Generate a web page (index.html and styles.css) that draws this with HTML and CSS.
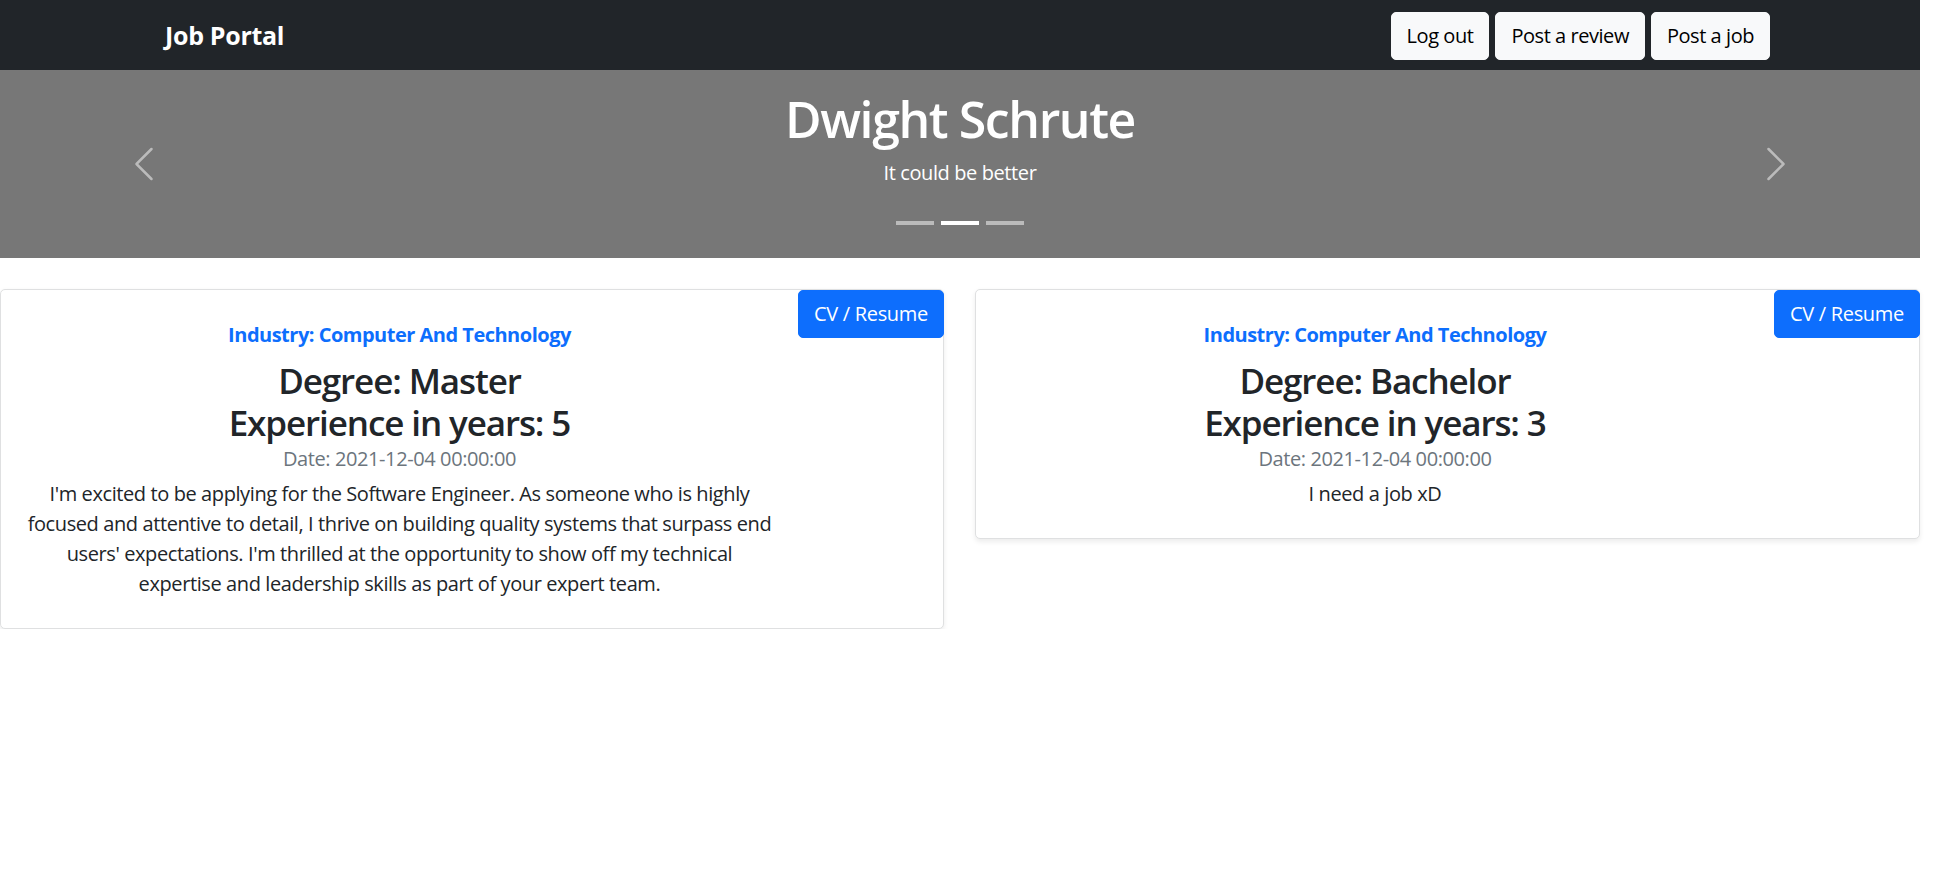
FILE: index.html
```html
<!DOCTYPE html>
<html lang="en">
<head>
<meta charset="utf-8">
<title>Job Portal</title>
<link rel="stylesheet" href="styles.css">
</head>
<body>
<div class="page">
  <nav class="navbar">
    <a class="brand" href="#">Job Portal</a>
    <div class="nav-actions">
      <button class="btn btn-light">Log out</button>
      <button class="btn btn-light">Post a review</button>
      <button class="btn btn-light">Post a job</button>
    </div>
  </nav>

  <div class="carousel">
    <button class="control" aria-label="Previous">
      <svg class="control-icon" viewBox="0 0 16 16"><path d="M11.354 1.646a.5.5 0 0 1 0 .708L5.707 8l5.647 5.646a.5.5 0 0 1-.708.708l-6-6a.5.5 0 0 1 0-.708l6-6a.5.5 0 0 1 .708 0z"/></svg>
    </button>
    <div class="carousel-center">
      <div class="caption">
        <h1 class="caption-title">Dwight Schrute</h1>
        <p class="caption-text">It could be better</p>
      </div>
      <div class="indicators">
        <span class="indicator"></span>
        <span class="indicator active"></span>
        <span class="indicator"></span>
      </div>
    </div>
    <button class="control" aria-label="Next">
      <svg class="control-icon" viewBox="0 0 16 16"><path d="M4.646 1.646a.5.5 0 0 1 .708 0l6 6a.5.5 0 0 1 0 .708l-6 6a.5.5 0 0 1-.708-.708L10.293 8 4.646 2.354a.5.5 0 0 1 0-.708z"/></svg>
    </button>
  </div>

  <div class="cards">
    <div class="card">
      <div class="card-body">
        <div class="industry">Industry: Computer And Technology</div>
        <h3 class="degree">Degree: Master<br>Experience in years: 5</h3>
        <div class="date">Date: 2021-12-04 00:00:00</div>
        <p class="desc">I'm excited to be applying for the Software Engineer. As someone who is highly focused and attentive to detail, I thrive on building quality systems that surpass end users' expectations. I'm thrilled at the opportunity to show off my technical expertise and leadership skills as part of your expert team.</p>
      </div>
      <button class="btn btn-primary cv">CV / Resume</button>
    </div>
    <div class="card">
      <div class="card-body">
        <div class="industry">Industry: Computer And Technology</div>
        <h3 class="degree">Degree: Bachelor<br>Experience in years: 3</h3>
        <div class="date">Date: 2021-12-04 00:00:00</div>
        <p class="desc">I need a job xD</p>
      </div>
      <button class="btn btn-primary cv">CV / Resume</button>
    </div>
  </div>
</div>
</body>
</html>
```

FILE: styles.css
```css
* { box-sizing: border-box; }

html, body {
  margin: 0;
  padding: 0;
  background: #fff;
}

body {
  font-family: "Open Sans", "Noto Sans", sans-serif;
  font-size: 20px;
  line-height: 1.5;
  color: #212529;
}

.page {
  width: 1920px;
}

/* Navbar */
.navbar {
  height: 70px;
  background: #212529;
  display: flex;
  align-items: center;
  justify-content: space-between;
  padding: 0 150px 0 165px;
}

.brand {
  color: #fff;
  text-decoration: none;
  font-size: 25px;
  font-weight: 700;
  line-height: 1.2;
  letter-spacing: -0.3px;
}

.nav-actions {
  display: flex;
  gap: 6px;
  padding-top: 2px;
}

.btn {
  font-family: inherit;
  font-size: 20px;
  line-height: 30px;
  padding: 8px 15px;
  border: 1px solid transparent;
  border-radius: 5px;
  cursor: pointer;
  letter-spacing: -0.3px;
}

.btn-light {
  background: #f8f9fa;
  border-color: #f8f9fa;
  color: #000;
  letter-spacing: -0.45px;
}

.btn-primary {
  background: #0d6efd;
  border-color: #0d6efd;
  color: #fff;
}

/* Carousel */
.carousel {
  height: 188px;
  background: #777;
  display: grid;
  grid-template-columns: 288px 1fr 288px;
}

.control {
  background: none;
  border: 0;
  padding: 0;
  display: flex;
  align-items: center;
  justify-content: center;
  opacity: 0.5;
}

.control-icon {
  width: 40px;
  height: 40px;
  fill: #fff;
}

.carousel-center {
  display: flex;
  flex-direction: column;
  align-items: center;
  padding-top: 19px;
  color: #fff;
}

.caption {
  text-align: center;
}

.caption-title {
  margin: 0 0 9px;
  font-size: 50px;
  line-height: 60px;
  font-weight: 600;
  letter-spacing: -1.4px;
}

.caption-text {
  margin: 0;
  font-size: 20px;
  line-height: 30px;
  letter-spacing: -0.4px;
}

.indicators {
  display: flex;
  gap: 7px;
  margin-top: 33px;
}

.indicator {
  width: 38px;
  height: 4px;
  background: #fff;
  opacity: 0.5;
}

.indicator.active {
  opacity: 1;
}

/* Cards */
.cards {
  display: grid;
  grid-template-columns: 944px 945px;
  column-gap: 31px;
  align-items: start;
  margin-top: 31px;
}

.card {
  display: flex;
  align-items: flex-start;
  border: 1px solid #dfe0e1;
  border-radius: 5px;
  background: #fff;
  box-shadow: 0 2.5px 5px rgba(0, 0, 0, 0.075);
}

.card-body {
  flex: 1;
  padding: 30px 24px 29px 24px;
  text-align: center;
}

.cv {
  margin: 0 -1px 0 0;
  flex: none;
}

.industry {
  color: #0d6efd;
  font-weight: 700;
  font-size: 20px;
  line-height: 30px;
  margin-bottom: 10px;
  letter-spacing: -0.5px;
}

.degree {
  margin: 0;
  font-size: 35px;
  line-height: 42px;
  font-weight: 600;
  letter-spacing: -1.1px;
}

.date {
  color: #6c757d;
  line-height: 30px;
  letter-spacing: -0.4px;
}

.desc {
  margin: 5px 0 0;
  line-height: 30px;
  letter-spacing: -0.4px;
}
```
